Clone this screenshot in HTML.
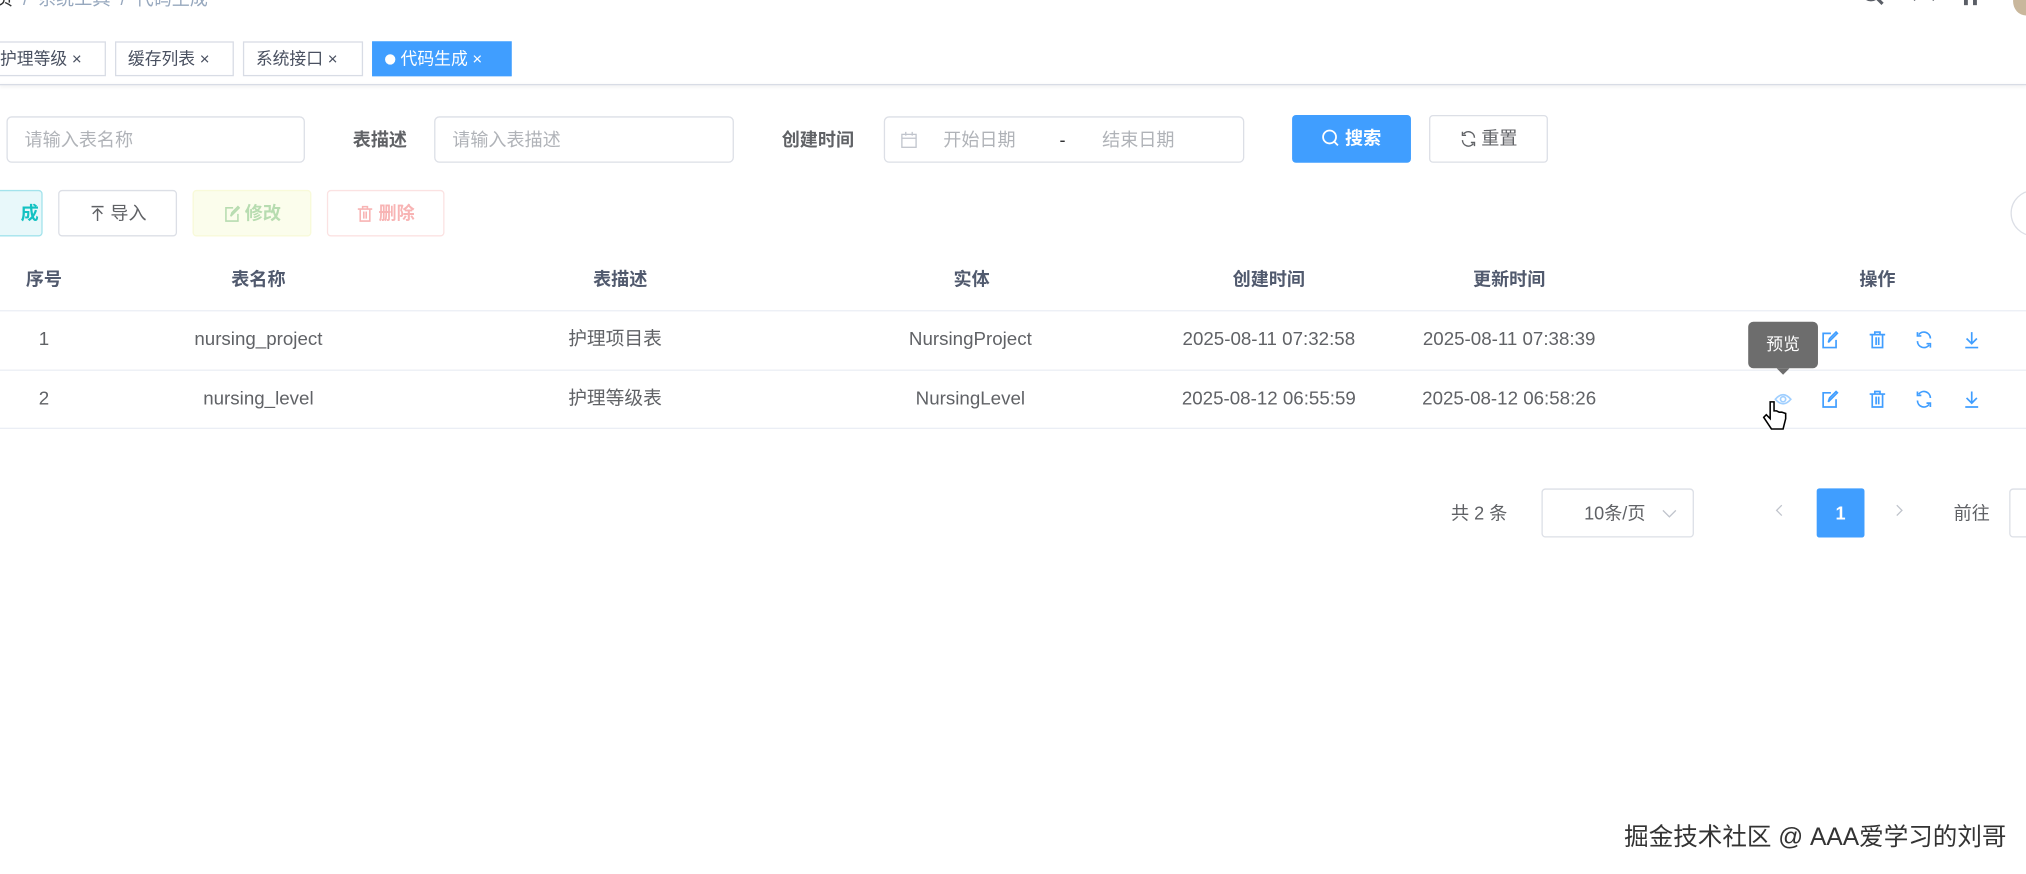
<!DOCTYPE html>
<html><head><meta charset="utf-8"><style>
html,body{margin:0;padding:0;background:#fff;overflow:hidden;width:2026px;height:874px}
#w{position:absolute;left:0;top:0;width:1568px;height:676px;transform:scale(1.29209);transform-origin:0 0;font-family:"Liberation Sans","Noto Sans CJK SC",sans-serif;color:#606266;font-size:14px}
.a{position:absolute;white-space:nowrap}
.tag{position:absolute;top:32px;height:27px;border:1px solid #d8dce5;box-sizing:border-box;font-size:13px;line-height:25px;color:#495060;padding-left:9px}
.inp{position:absolute;top:90px;height:36px;border:1px solid #dcdfe6;border-radius:4px;box-sizing:border-box;color:#b0b3b8;line-height:34px;padding-left:13px}
.lbl{position:absolute;top:98px;font-weight:bold;color:#606266;line-height:20px}
.btn{position:absolute;top:147px;height:36px;border-radius:3px;box-sizing:border-box;line-height:34px;text-align:center}
.th{position:absolute;top:206px;line-height:20px;font-weight:bold;color:#515a6e;transform:translateX(-50%)}
.td{position:absolute;transform:translateX(-50%);color:#606266;font-size:14.5px;line-height:20px;height:20px}
.ln{position:absolute;left:0;width:1568px;height:1px;background:#ebeef5}
svg.ic{position:absolute;width:14px;height:14px;stroke:#409eff;fill:none;stroke-width:1.3}
</style></head><body><div id="w">
<div class="a" style="left:-4px;top:-11px;font-size:14px;line-height:20px;color:#97a8be"><span style="color:#303133">页</span> &nbsp;/&nbsp; 系统工具 &nbsp;/&nbsp; 代码生成</div>
<svg class="a" style="left:1440px;top:-8px" width="20" height="14" viewBox="0 0 20 14"><circle cx="8" cy="2" r="6" fill="none" stroke="#5a5e66" stroke-width="2.2"/><path d="M12 6l5 5" stroke="#5a5e66" stroke-width="2.4"/></svg>
<svg class="a" style="left:1479px;top:-6px" width="20" height="12" viewBox="0 0 20 12"><path d="M2 0v6M2 6l5-5M18 6V0M18 6l-5-5" stroke="#5a5e66" stroke-width="2.2" fill="none"/></svg>
<div class="a" style="left:1520px;top:-4px;width:3px;height:8px;background:#5a5e66"></div><div class="a" style="left:1527px;top:-4px;width:3px;height:8px;background:#5a5e66"></div>
<div class="a" style="left:1558px;top:-10px;width:20px;height:22px;border-radius:50%;background:#c9b79c"></div>

<div class="tag" style="left:-10px;width:92px">护理等级 ×</div>
<div class="tag" style="left:89px;width:92px">缓存列表 ×</div>
<div class="tag" style="left:188px;width:93px">系统接口 ×</div>
<div class="tag" style="left:288px;width:108px;background:#409eff;border-color:#409eff;color:#fff"><span style="display:inline-block;width:8px;height:8px;border-radius:50%;background:#fff;margin-right:4px;vertical-align:0"></span>代码生成 ×</div>
<div class="a" style="left:0;top:65px;width:1568px;height:1px;background:#d8dce5;box-shadow:0 1px 3px rgba(0,0,0,.12)"></div>

<div class="inp" style="left:5px;width:231px">请输入表名称</div>
<div class="lbl" style="left:273px">表描述</div>
<div class="inp" style="left:336px;width:232px">请输入表描述</div>
<div class="lbl" style="left:605px">创建时间</div>
<div class="inp" style="left:684px;width:279px;padding-left:0">
<svg class="a" style="left:12px;top:11px" width="13" height="13" viewBox="0 0 13 13"><rect x="1" y="2" width="11" height="10" fill="none" stroke="#c0c4cc"/><path d="M1 5h11M4 0v3M9 0v3" stroke="#c0c4cc"/></svg>
<span class="a" style="left:45px">开始日期</span><span class="a" style="left:135px;color:#303133">-</span><span class="a" style="left:168px">结束日期</span></div>
<div class="btn" style="left:1000px;top:89px;width:92px;height:37px;line-height:37px;background:#409eff;color:#fff;font-weight:bold"><svg style="vertical-align:-2px" width="14" height="14" viewBox="0 0 14 14"><circle cx="6" cy="6" r="5" fill="none" stroke="#fff" stroke-width="1.4"/><path d="M9.5 9.5l3 3" stroke="#fff" stroke-width="1.4"/></svg> 搜索</div>
<div class="btn" style="left:1106px;top:89px;width:92px;height:37px;line-height:35px;border:1px solid #dcdfe6;color:#606266"><svg style="vertical-align:-2px" width="13" height="13" viewBox="0 0 14 14" fill="none" stroke="#606266" stroke-width="1.2"><path d="M12 6A5 5 0 0 0 3 3M2 1v3h3M2 8a5 5 0 0 0 9 3M12 13v-3H9"/></svg> 重置</div>

<div class="btn" style="left:-10px;width:43px;background:#e8f8fa;border:1px solid #a3e3ec;color:#13c2c2;font-weight:bold;text-align:right;padding-right:2px">成</div>
<div class="btn" style="left:45px;width:92px;border:1px solid #dcdfe6;color:#606266"><svg style="vertical-align:-2px" width="13" height="13" viewBox="0 0 14 14" fill="none" stroke="#606266" stroke-width="1.2"><path d="M7 13V3M3 7l4-4 4 4M2 1h10"/></svg> 导入</div>
<div class="btn" style="left:149px;width:92px;background:#fbfdec;border:1px solid #f8fad9;color:#b7dcb0;font-weight:bold"><svg style="vertical-align:-2px" width="13" height="13" viewBox="0 0 14 14" fill="none" stroke="#b7dcb0" stroke-width="1.3"><path d="M8 2H2v11h10V7M6 9l1-3 5-5 1 1-5 5z"/></svg> 修改</div>
<div class="btn" style="left:253px;width:91px;background:#fff;border:1px solid #fbe2e2;color:#f8b4b4;font-weight:bold"><svg style="vertical-align:-2px" width="13" height="13" viewBox="0 0 14 14" fill="none" stroke="#f8b4b4" stroke-width="1.3"><path d="M1 3h12M5 3V1h4v2M3 3v10h8V3M6 5v6M8 5v6"/></svg> 删除</div>
<div class="a" style="left:1556px;top:147px;width:36px;height:36px;border:1px solid #dcdfe6;border-radius:50%;box-sizing:border-box"></div>

<div class="th" style="left:34px">序号</div><div class="th" style="left:200px">表名称</div><div class="th" style="left:480px">表描述</div><div class="th" style="left:752px">实体</div><div class="th" style="left:982px">创建时间</div><div class="th" style="left:1168px">更新时间</div><div class="th" style="left:1453px">操作</div>
<div class="ln" style="top:240px"></div><div class="ln" style="top:286px"></div><div class="ln" style="top:331px"></div>

<div class="td" style="left:34px;top:253px">1</div><div class="td" style="left:200px;top:253px">nursing_project</div><div class="td" style="left:476px;top:253px">护理项目表</div><div class="td" style="left:751px;top:253px">NursingProject</div><div class="td" style="left:982px;top:253px">2025-08-11 07:32:58</div><div class="td" style="left:1168px;top:253px">2025-08-11 07:38:39</div>
<div class="td" style="left:34px;top:299px">2</div><div class="td" style="left:200px;top:299px">nursing_level</div><div class="td" style="left:476px;top:299px">护理等级表</div><div class="td" style="left:751px;top:299px">NursingLevel</div><div class="td" style="left:982px;top:299px">2025-08-12 06:55:59</div><div class="td" style="left:1168px;top:299px">2025-08-12 06:58:26</div>

<svg class="ic" style="left:1373px;top:302px;stroke:#a0cfff" viewBox="0 0 14 14"><path d="M1 7q6-7 12 0q-6 7-12 0z"/><circle cx="7" cy="7" r="2"/></svg>
<svg class="ic" style="left:1409px;top:256px" viewBox="0 0 14 14"><path d="M8 2H2v11h10V7M6 9l1-3 5-5 1 1-5 5z"/></svg>
<svg class="ic" style="left:1409px;top:302px" viewBox="0 0 14 14"><path d="M8 2H2v11h10V7M6 9l1-3 5-5 1 1-5 5z"/></svg>
<svg class="ic" style="left:1446px;top:256px" viewBox="0 0 14 14"><path d="M1 3h12M5 3V1h4v2M3 3v10h8V3M6 5v6M8 5v6"/></svg>
<svg class="ic" style="left:1446px;top:302px" viewBox="0 0 14 14"><path d="M1 3h12M5 3V1h4v2M3 3v10h8V3M6 5v6M8 5v6"/></svg>
<svg class="ic" style="left:1482px;top:256px" viewBox="0 0 14 14"><path d="M12 6A5 5 0 0 0 3 3M2 1v3h3M2 8a5 5 0 0 0 9 3M12 13v-3H9"/></svg>
<svg class="ic" style="left:1482px;top:302px" viewBox="0 0 14 14"><path d="M12 6A5 5 0 0 0 3 3M2 1v3h3M2 8a5 5 0 0 0 9 3M12 13v-3H9"/></svg>
<svg class="ic" style="left:1519px;top:256px" viewBox="0 0 14 14"><path d="M7 1v9M3 6l4 4 4-4M2 13h10"/></svg>
<svg class="ic" style="left:1519px;top:302px" viewBox="0 0 14 14"><path d="M7 1v9M3 6l4 4 4-4M2 13h10"/></svg>
<div class="a" style="left:1353px;top:249px;width:54px;height:36px;background:#6d6d6d;border-radius:4px;color:#fff;font-size:13px;line-height:36px;text-align:center">预览</div>
<div class="a" style="left:1375px;top:285px;width:0;height:0;border:5px solid transparent;border-top-color:#6d6d6d"></div>
<svg class="a" style="left:1364px;top:309px" width="20" height="28" viewBox="0 0 20 28"><path d="M6 2v13l-3-3-2 2 6 9h9l2-8V11l-3-1-2 0-2-1-2 0V2z" fill="#fff" stroke="#000" stroke-width="1.2"/></svg>

<div class="a" style="left:1123px;top:387px;line-height:20px;color:#606266">共 2 条</div>
<div class="a" style="left:1193px;top:378px;width:118px;height:38px;border:1px solid #dcdfe6;border-radius:3px;box-sizing:border-box;line-height:36px;padding-left:32px;color:#606266">10条/页<svg style="position:absolute;left:92px;top:15px" width="12" height="7" viewBox="0 0 12 7"><path d="M1 1l5 5 5-5" fill="none" stroke="#c0c4cc"/></svg></div>
<svg class="a" style="left:1374px;top:390px" width="6" height="10" viewBox="0 0 6 10"><path d="M5 1L1 5l4 4" fill="none" stroke="#c0c4cc"/></svg>
<div class="a" style="left:1406px;top:378px;width:37px;height:38px;background:#409eff;color:#fff;font-weight:bold;line-height:38px;text-align:center;border-radius:2px">1</div>
<svg class="a" style="left:1467px;top:390px" width="6" height="10" viewBox="0 0 6 10"><path d="M1 1l4 4-4 4" fill="none" stroke="#c0c4cc"/></svg>
<div class="a" style="left:1512px;top:387px;line-height:20px;color:#606266">前往</div>
<div class="a" style="left:1555px;top:378px;width:40px;height:38px;border:1px solid #dcdfe6;border-radius:3px;box-sizing:border-box"></div>

<div class="a" style="left:1257px;top:636px;font-size:19px;line-height:26px;color:#333;text-shadow:0 0 2px #fff,0 0 2px #fff">掘金技术社区 @ AAA爱学习的刘哥</div>
</div></body></html>
